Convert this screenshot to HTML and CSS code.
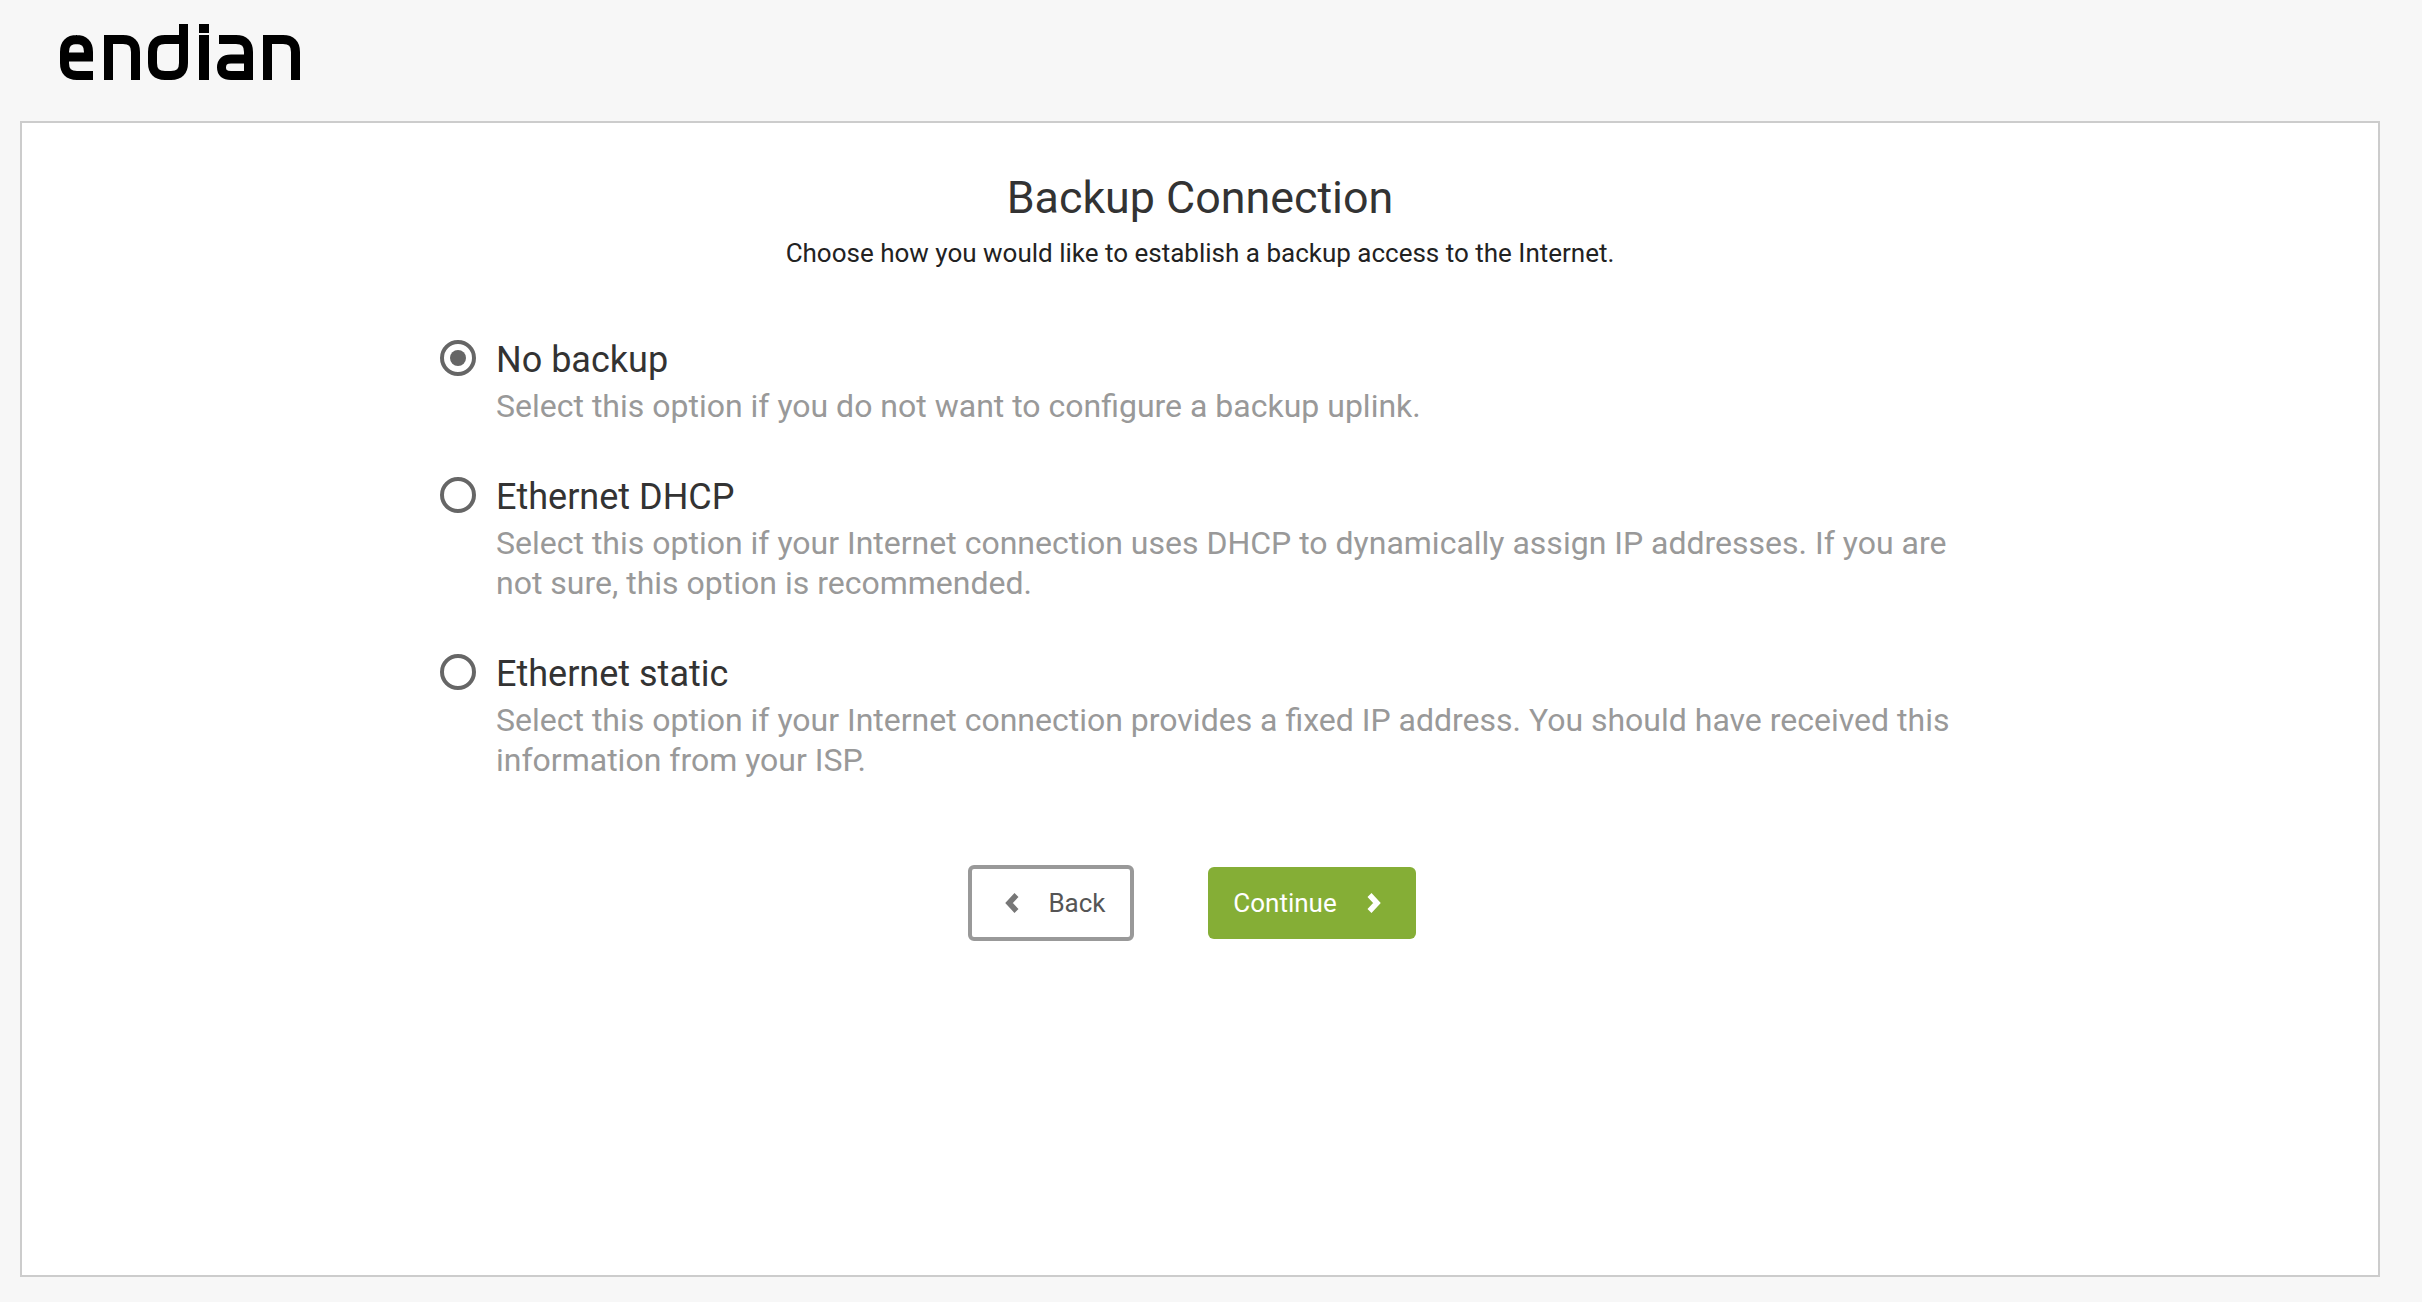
FILE: index.html
```html
<!DOCTYPE html>
<html lang="en">
<head>
<meta charset="utf-8">
<title>Backup Connection</title>
<link rel="stylesheet" href="styles.css">
</head>
<body>
<header class="topbar">
  <svg class="logo" role="img" aria-label="endian" width="242" height="58" viewBox="0 0 242 58" fill="none" stroke="#000" stroke-width="9">
    <path d="M34 52.500H18Q5.500 52.500 5.500 40V29Q5.500 16.500 18 16.500H17Q29.500 16.500 29.500 29V34H5.500"/>
    <path d="M49.500 57V16.500H64Q76.500 16.500 76.500 29V57"/>
    <path d="M124.500 1V40Q124.500 52.500 112 52.500H106Q93.500 52.500 93.500 40V29Q93.500 16.500 106 16.500H124"/>
    <path d="M145 1V10M145 12V57" stroke-width="10"/>
    <path d="M160 16.500H177Q189.500 16.500 189.500 29V52.500H172Q162.500 52.500 162.500 44.500Q162.500 36 172 36H189"/>
    <path d="M208.500 57V16.500H224Q236.500 16.500 236.500 29V57"/>
  </svg>
</header>
<main class="card">
  <h1 class="title">Backup Connection</h1>
  <p class="subtitle">Choose how you would like to establish a backup access to the Internet.</p>
  <form class="options">
    <label class="option">
      <span class="radio radio-on"></span>
      <span class="option-body">
        <span class="option-name">No backup</span>
        <span class="option-desc">Select this option if you do not want to configure a backup uplink.</span>
      </span>
    </label>
    <label class="option">
      <span class="radio"></span>
      <span class="option-body">
        <span class="option-name">Ethernet DHCP</span>
        <span class="option-desc">Select this option if your Internet connection uses DHCP to dynamically assign IP addresses. If you are not sure, this option is recommended.</span>
      </span>
    </label>
    <label class="option">
      <span class="radio"></span>
      <span class="option-body">
        <span class="option-name">Ethernet static</span>
        <span class="option-desc">Select this option if your Internet connection provides a fixed IP address. You should have received this information from your ISP.</span>
      </span>
    </label>
  </form>
  <div class="actions">
    <a class="btn btn-back">
      <svg class="chev" width="16" height="22" viewBox="0 0 16 22"><path d="M12.500 3 5 11l7.500 8" fill="none" stroke="#777" stroke-width="5.500"/></svg>
      <span>Back</span>
    </a>
    <a class="btn btn-next">
      <span>Continue</span>
      <svg class="chev" width="16" height="22" viewBox="0 0 16 22"><path d="M3.500 3 11 11l-7.500 8" fill="none" stroke="#fff" stroke-width="5.500"/></svg>
    </a>
  </div>
</main>
</body>
</html>
```
FILE: styles.css
```css
* { box-sizing: border-box; }
html, body { margin: 0; height: 100%; }
body {
  background: #f7f7f7;
  font-family: Roboto, "Liberation Sans", sans-serif;
  color: #333;
  padding: 0 42px 25px 20px;
  display: flex;
  flex-direction: column;
}
.topbar { height: 121px; padding: 23px 0 0 39px; flex: none; }
.logo { display: block; }
.card {
  flex: 1;
  background: #fff;
  border: 2px solid #ccc;
  display: flex;
  flex-direction: column;
  align-items: center;
  padding-top: 48px;
}
.title { margin: 0; font-size: 44.800px; line-height: 54px; font-weight: 400; color: #333; }
.subtitle { margin: 11px 0 0; font-size: 26px; line-height: 34px; color: #222; }
.options { width: 1520px; margin-top: 68px; display: flex; flex-direction: column; gap: 49px; }
.option { display: flex; gap: 20px; align-items: flex-start; }
.radio {
  width: 36px; height: 36px; border-radius: 50%;
  border: 4px solid #666; flex: none; margin-top: 2px;
  display: flex; align-items: center; justify-content: center;
}
.radio-on::after { content: ""; width: 16px; height: 16px; border-radius: 50%; background: #666; }
.option-body { display: flex; flex-direction: column; }
.option-name { font-size: 36px; line-height: 44px; color: #333; }
.option-desc { font-size: 32px; line-height: 40px; color: #999; margin-top: 4px; }
.actions { display: flex; gap: 74px; align-items: center; margin-top: 85px; margin-right: 16px; }
.btn {
  display: flex; align-items: center; justify-content: center;
  font-size: 26px; border-radius: 6px;
}
.btn-back { width: 166px; height: 76px; border: 4px solid #999; color: #555; gap: 28px; padding-left: 8px; }
.btn-next { width: 208px; height: 72px; background: #85ae36; color: #fff; gap: 29px; padding-right: 9px; }
```
